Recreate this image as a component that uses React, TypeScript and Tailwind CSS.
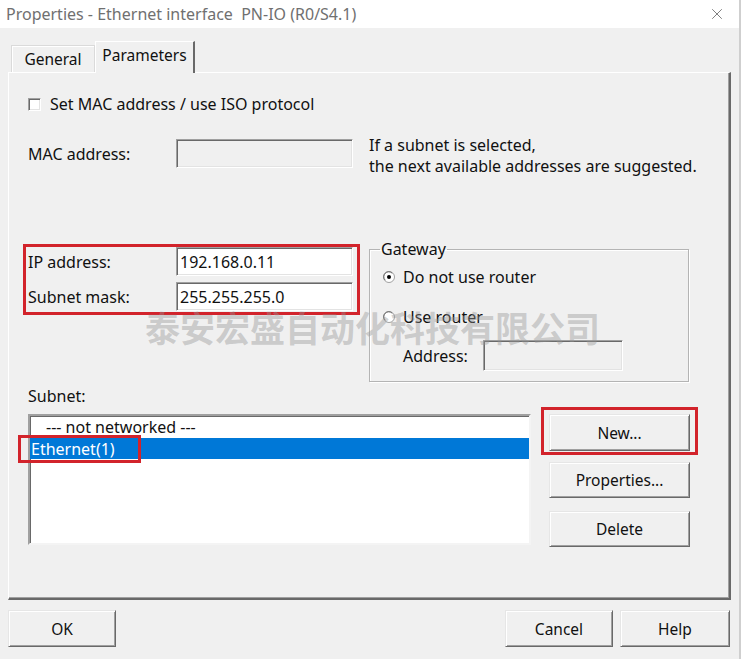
import { X } from 'lucide-react';

const raised =
  'border border-t-[#e6e6e6] border-l-[#e6e6e6] border-r-[#696969] border-b-[#696969] shadow-[inset_1px_1px_0_#ffffff,inset_-1px_-1px_0_#a0a0a0] bg-[#f0f0f0]';
const sunken =
  'border border-t-[#a0a0a0] border-l-[#a0a0a0] border-r-white border-b-white shadow-[inset_1px_1px_0_#696969,inset_-1px_-1px_0_#e3e3e3]';

function Radio({ checked }: { checked?: boolean }) {
  return (
    <svg width="12" height="12" viewBox="0 0 12 12" className="shrink-0">
      <circle cx="6" cy="6" r="5.5" fill="#ffffff" stroke="#a0a0a0" />
      <path d="M2.2 9.2 A4.6 4.6 0 0 1 9.2 2.2" fill="none" stroke="#696969" strokeWidth="1" />
      {checked && <circle cx="6" cy="6" r="2" fill="#000000" />}
    </svg>
  );
}

function Button({ label, className = '' }: { label: string; className?: string }) {
  return (
    <button className={`${raised} flex items-center justify-center text-[15.5px] text-[#111] ${className}`}>
      {label}
    </button>
  );
}

export default function App() {
  return (
    <div className="relative w-[741px] h-[659px] overflow-hidden bg-[#f0f0f0] border-r-2 border-[#cfcfcf] font-['Noto_Sans',sans-serif] text-[16px] text-[#111] leading-[20px]">
      {/* title bar */}
      <div className="h-[28px] bg-white flex items-center justify-between pl-[6px] pr-[13px]">
        <span className="text-[16px] text-[#707070]">Properties - Ethernet interface&nbsp; PN-IO (R0/S4.1)</span>
        <X className="h-[18px] w-[18px] text-[#555]" strokeWidth={1} />
      </div>

      {/* tabs */}
      <div className="h-[44px] flex items-end pl-[11px]">
        <div className="w-[84px] h-[27px] flex items-center justify-center text-[15.5px] border border-b-0 border-t-[#dadada] border-l-[#dadada] border-r-[#dadada] shadow-[inset_1px_1px_0_#ffffff]">
          General
        </div>
        <div className="relative z-10 -mb-px w-[100px] h-[32px] flex items-start justify-center pt-[3px] text-[15.5px] bg-[#f0f0f0] border-t border-l border-t-white border-l-white border-r-2 border-r-[#696969]">
          Parameters
        </div>
      </div>

      {/* tab panel */}
      <div className="ml-[8px] w-[723px] h-[528px] border-t border-l border-t-white border-l-white border-r-2 border-b-2 border-r-[#696969] border-b-[#696969] shadow-[inset_-1px_-1px_0_#a0a0a0] pl-[19px]">
        {/* checkbox */}
        <div className="mt-[21px] h-[20px] flex items-center">
          <span className={`w-[13px] h-[13px] bg-white ${sunken}`} />
          <span className="ml-[9px]">Set MAC address / use ISO protocol</span>
        </div>

        {/* MAC */}
        <div className="mt-[21px] h-[42px] flex items-start">
          <div className="mt-[4px] flex items-center">
            <span className="w-[148px]">MAC address:</span>
            <span className={`w-[177px] h-[29px] bg-[#f0f0f0] ${sunken}`} />
          </div>
          <div className="ml-[16px] leading-[21px]">
            <div>If a subnet is selected,</div>
            <div>the next available addresses are suggested.</div>
          </div>
        </div>

        {/* IP + Gateway */}
        <div className="mt-[62px] flex items-start">
          <div className="mt-[5px] -ml-[5px] w-[337px] h-[71px] border-[3px] border-[#d2232b] pl-[2px] pr-[3px] flex flex-col gap-[6px]">
            <div className="flex items-center h-[29px]">
              <span className="w-[148px]">IP address:</span>
              <span className={`w-[177px] h-[29px] bg-white flex items-center pl-[3px] ${sunken}`}>192.168.0.11</span>
            </div>
            <div className="flex items-center h-[29px]">
              <span className="w-[148px]">Subnet mask:</span>
              <span className={`w-[177px] h-[29px] bg-white flex items-center pl-[3px] ${sunken}`}>255.255.255.0</span>
            </div>
          </div>

          <fieldset className="ml-[9px] w-[320px] h-[143px] border border-[#b4b4b4] shadow-[inset_1px_1px_0_#ffffff,1px_1px_0_#ffffff]">
            <legend className="ml-[10px] px-[1px] leading-[20px]">Gateway</legend>
            <div className="pl-[13px]">
              <div className="mt-[8px] h-[20px] flex items-center">
                <Radio checked />
                <span className="ml-[8px]">Do not use router</span>
              </div>
              <div className="mt-[20px] h-[20px] flex items-center">
                <Radio />
                <span className="ml-[8px]">Use router</span>
              </div>
              <div className="mt-[13px] pl-[20px] flex items-center">
                <span className="w-[80px]">Address:</span>
                <span className={`w-[140px] h-[31px] bg-[#f0f0f0] ${sunken}`} />
              </div>
            </div>
          </fieldset>
        </div>

        {/* Subnet */}
        <div className="mt-[4px] h-[20px]">Subnet:</div>
        <div className="flex items-start">
          <div className="mt-[8px] w-[503px] h-[131px] bg-white border-2 border-t-[#a0a0a0] border-l-[#a0a0a0] border-r-[#f4f4f4] border-b-[#f4f4f4] shadow-[inset_1px_1px_0_#696969]">
            <div className="h-[21px] flex items-center pl-[16px]">--- not networked ---</div>
            <div className="relative mt-px h-[21px] flex items-center pl-px bg-[#0078d7] text-white">
              Ethernet(1)
              <span className="absolute -left-[12px] -top-[3px] w-[123px] h-[28px] border-[3px] border-[#d2232b]" />
            </div>
          </div>

          <div className="ml-[10px] flex flex-col">
            <div className="mt-px w-[157px] h-[48px] border-[3px] border-[#d2232b] pl-[5px] pt-[4px]">
              <Button label="New..." className="w-[141px] h-[37px]" />
            </div>
            <Button label="Properties..." className="mt-[7px] ml-[8px] w-[141px] h-[36px]" />
            <Button label="Delete" className="mt-[13px] ml-[8px] w-[141px] h-[36px]" />
          </div>
        </div>
      </div>

      {/* bottom buttons */}
      <div className="mt-[10px] pl-[8px] flex">
        <Button label="OK" className="w-[108px] h-[37px]" />
        <Button label="Cancel" className="ml-[389px] w-[108px] h-[37px]" />
        <Button label="Help" className="ml-[7px] w-[110px] h-[37px]" />
      </div>

      {/* watermark */}
      <div className="pointer-events-none absolute left-[145px] top-[309px] text-[35px] leading-[35px] font-bold text-[rgba(150,150,150,0.42)] font-['Noto_Sans_CJK_SC',sans-serif] whitespace-nowrap">
        泰安宏盛自动化科技有限公司
      </div>
    </div>
  );
}
